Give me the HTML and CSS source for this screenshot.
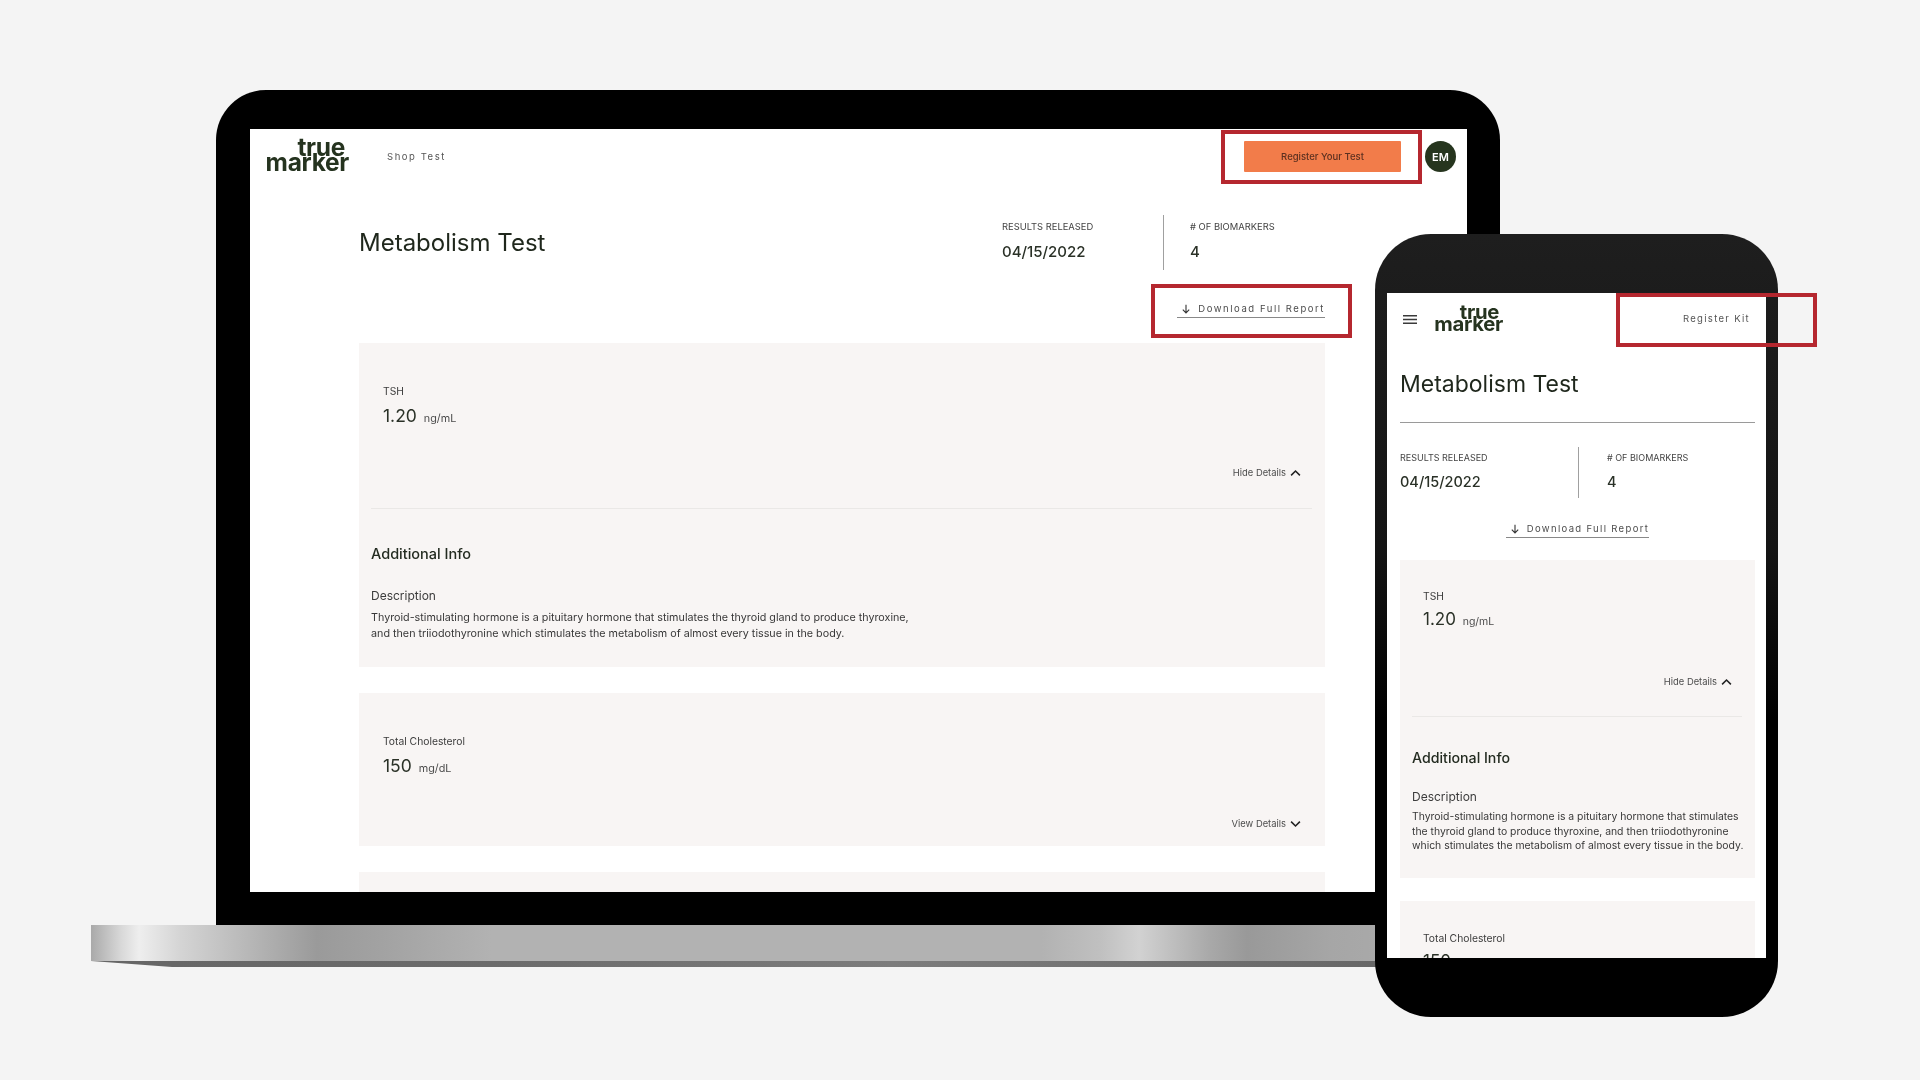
FILE: index.html
```html
<!DOCTYPE html>
<html lang="en">
<head>
<meta charset="utf-8">
<title>Metabolism Test</title>
<link rel="stylesheet" href="styles.css">
</head>
<body>
<div class="stage">
  <div class="base"><div class="base-top"></div><div class="base-lip"></div></div>

  <div class="laptop">
    <div class="screen">
      <header class="bar">
        <div class="logo"><span>true</span><span>marker</span></div>
        <a class="nav">Shop Test</a>
        <div class="bar-right">
          <a class="cta">Register Your Test</a>
          <div class="avatar">EM</div>
        </div>
      </header>
      <main class="main">
        <div class="head">
          <h1 class="title">Metabolism Test</h1>
          <div class="stats">
            <div class="stat stat-a"><div class="stat-label">RESULTS RELEASED</div><div class="stat-value">04/15/2022</div></div>
            <div class="stat stat-b"><div class="stat-label"># OF BIOMARKERS</div><div class="stat-value">4</div></div>
          </div>
        </div>
        <div class="dl-row">
          <a class="dl"><svg class="dl-icon" viewBox="0 0 10 10"><path d="M5 .8V8.8M1.8 5.7 5 8.9 8.2 5.7"/></svg>Download Full Report</a>
        </div>
        <section class="card card-open">
          <div class="metric">
            <div class="metric-label">TSH</div>
            <div class="metric-value">1.20 <span class="unit">ng/mL</span></div>
          </div>
          <div class="toggle">Hide Details<svg class="chev" viewBox="0 0 12 8"><path d="M1.2 6.6 6 1.8l4.800 4.800"/></svg></div>
          <hr class="sep">
          <h2 class="info-title">Additional Info</h2>
          <h3 class="info-sub">Description</h3>
          <p class="info-body">Thyroid-stimulating hormone is a pituitary hormone that stimulates the thyroid gland to produce thyroxine, and then triiodothyronine which stimulates the metabolism of almost every tissue in the body.</p>
        </section>
        <section class="card card-closed">
          <div class="metric">
            <div class="metric-label">Total Cholesterol</div>
            <div class="metric-value">150 <span class="unit">mg/dL</span></div>
          </div>
          <div class="toggle">View Details<svg class="chev" viewBox="0 0 12 8"><path d="M1.2 1.400 6 6.200l4.800-4.800"/></svg></div>
        </section>
        <section class="card card-stub"></section>
      </main>
    </div>
  </div>

  <div class="phone">
    <div class="screen">
      <header class="bar">
        <svg class="burger" viewBox="0 0 14 9"><path d="M0 .75H14M0 4.500H14M0 8.250H14"/></svg>
        <div class="logo"><span>true</span><span>marker</span></div>
        <a class="nav nav-end">Register Kit</a>
      </header>
      <main class="main">
        <h1 class="title">Metabolism Test</h1>
        <hr class="rule">
        <div class="stats">
          <div class="stat stat-a"><div class="stat-label">RESULTS RELEASED</div><div class="stat-value">04/15/2022</div></div>
          <div class="stat stat-b"><div class="stat-label"># OF BIOMARKERS</div><div class="stat-value">4</div></div>
        </div>
        <div class="dl-row">
          <a class="dl"><svg class="dl-icon" viewBox="0 0 10 10"><path d="M5 .8V8.8M1.8 5.7 5 8.9 8.2 5.700"/></svg>Download Full Report</a>
        </div>
        <section class="card card-open">
          <div class="metric">
            <div class="metric-label">TSH</div>
            <div class="metric-value">1.20 <span class="unit">ng/mL</span></div>
          </div>
          <div class="toggle">Hide Details<svg class="chev" viewBox="0 0 12 8"><path d="M1.2 6.6 6 1.8l4.800 4.800"/></svg></div>
          <hr class="sep">
          <h2 class="info-title">Additional Info</h2>
          <h3 class="info-sub">Description</h3>
          <p class="info-body">Thyroid-stimulating hormone is a pituitary hormone that stimulates the thyroid gland to produce thyroxine, and then triiodothyronine which stimulates the metabolism of almost every tissue in the body.</p>
        </section>
        <section class="card card-closed">
          <div class="metric">
            <div class="metric-label">Total Cholesterol</div>
            <div class="metric-value">150 <span class="unit">mg/dL</span></div>
          </div>
        </section>
      </main>
    </div>
  </div>

  <div class="mark mark-cta"></div>
  <div class="mark mark-dl"></div>
  <div class="mark mark-kit"></div>
</div>
</body>
</html>
```
FILE: styles.css
```css
* { box-sizing: border-box; }
html, body { margin: 0; padding: 0; }
body { background: #f4f4f4; font-family: Inter, "Liberation Sans", sans-serif; color: #232b20; }
a { display: block; }
h1, h2, h3, p { margin: 0; font-weight: 400; }
hr { border: 0; margin: 0; }

.stage { position: relative; width: 1920px; height: 1080px; overflow: hidden; }

/* laptop base */
.base { position: absolute; left: 91px; top: 925px; width: 1310px; display: flex; flex-direction: column; }
.base-top {
  height: 36px;
  background: linear-gradient(90deg, #a9a9a9 0, #d8d8d8 30px, #eeeeee 48px, #d4d4d4 90px, #9a9a9a 226px, #a2a2a2 290px, #b2b2b2 400px, #b2b2b2 950px, #c0c0c0 1010px, #d2d2d2 1048px, #a8a8a8 1120px, #999 1156px, #a6a6a6 1240px, #aaa 1310px);
}
.base-lip {
  height: 6px;
  background: linear-gradient(90deg, #666 0, #6b6b6b 400px, #7c7c7c 800px, #666 1310px);
  clip-path: polygon(0 0, 100% 0, 100% 100%, 81px 100%);
}

/* device frames */
.laptop {
  position: absolute; left: 216px; top: 90px; width: 1284px; height: 835px;
  padding: 39px 33px 33px 34px;
  background: #000;
  border-radius: 50px 50px 0 0 / 50px 50px 0 0;
}
.phone {
  position: absolute; left: 1375px; top: 234px; width: 403px; height: 783px;
  padding: 59px 12px;
  background: linear-gradient(180deg, #1e1e1e 0, #141414 40%, #000 62%);
  border-radius: 56px;
}
.screen { width: 100%; height: 100%; background: #fff; overflow: hidden; filter: blur(.35px); }

/* shared header */
.bar { display: flex; align-items: center; }
.laptop .bar { height: 55px; padding: 0 11px 0 14px; }
.phone .bar { height: 52px; padding: 0 16px; }

.logo { display: flex; flex-direction: column; align-items: flex-end; font-weight: 700; color: #25331f; letter-spacing: -.3px; }
.logo span:first-child { margin-right: 4px; }
.laptop .logo { width: 85px; margin-top: -3px; font-size: 24.500px; line-height: 15.500px; }
.phone .logo { width: 70px; margin-left: 16px; margin-top: -2px; font-size: 20.300px; line-height: 12px; }
.phone .logo span:first-child { margin-right: 4px; }

.nav { font-size: 9.500px; letter-spacing: 1.550px; color: #555; white-space: nowrap; }
.laptop .nav { margin-left: 38px; }
.nav-end { margin-left: auto; letter-spacing: 1.300px; margin-top: -1px; }

.burger { width: 14px; height: 9px; fill: none; stroke: #3a3a3a; stroke-width: 1.500; }

.bar-right { margin-left: auto; display: flex; align-items: center; gap: 24px; }
.cta {
  width: 157px; height: 31px; background: #f27c4a; border-radius: 1px;
  display: flex; align-items: center; justify-content: center;
  font-size: 9.500px; font-weight: 500; color: #5c3020;
}
.avatar {
  width: 31px; height: 31px; border-radius: 50%; background: #26351e; color: #fff;
  display: flex; align-items: center; justify-content: center;
  font-size: 11px; font-weight: 600;
}

/* content */
.laptop .main { padding: 0 142px 0 109px; }
.phone .main { padding: 0 11px 0 13px; }

.head { display: flex; justify-content: space-between; align-items: center; margin-top: 31px; height: 55px; }
.title { font-size: 24px; line-height: 30px; color: #1f271c; white-space: nowrap; }
.phone .title { font-size: 23px; margin-top: 24px; }
.rule { height: 1px; background: #9a9a9a; margin-top: 23px; }

.stats { display: flex; }
.laptop .stats { height: 55px; }
.phone .stats { height: 51px; margin-top: 24px; }
.stat { display: flex; flex-direction: column; }
.laptop .stat-a { width: 161px; }
.laptop .stat-b { width: 162px; padding-left: 26px; }
.phone .stat-a { width: 178px; }
.phone .stat-b { width: 177px; padding-left: 28px; }
.stat-b { border-left: 1px solid #a0a0a0; }
.stat-label { font-size: 9.400px; line-height: 12px; color: #444; white-space: nowrap; margin-top: 6px; }
.phone .stat-label { font-size: 9px; margin-top: 5px; }
.stat-value { font-size: 15px; font-weight: 500; line-height: 20px; color: #2a3127; margin-top: 9px; }
.phone .stat-value { font-size: 14.500px; margin-top: 8px; }

.dl-row { display: flex; }
.laptop .dl-row { justify-content: flex-end; margin-top: 30px; }
.phone .dl-row { justify-content: center; margin-top: 22px; }
.dl {
  display: flex; align-items: center; height: 18px;
  font-size: 9.500px; letter-spacing: 1.550px; color: #4c4c4c; white-space: nowrap;
  border-bottom: 1.500px solid #888; padding: 0 0 0 4px;
}
.phone .dl { letter-spacing: 1.330px; }
.dl-icon { width: 10px; height: 10px; margin-right: 7px; fill: none; stroke: #333; stroke-width: 1.100; }

.card { background: #f8f5f4; padding: 0 13px 0 12px; }
.laptop .card-open { margin-top: 25px; height: 324px; }
.laptop .card-closed { margin-top: 26px; height: 153px; }
.laptop .card-stub { margin-top: 26px; height: 40px; }
.phone .card-open { margin-top: 22px; height: 318px; }
.phone .card-closed { margin-top: 23px; height: 80px; }

.metric { padding-left: 12px; }
.laptop .metric { padding-top: 41px; }
.phone .metric { padding-top: 29px; padding-left: 11px; }
.phone .card-closed .metric { padding-top: 30px; }
.metric-label { font-size: 10.300px; line-height: 14px; color: #3c3c3c; white-space: nowrap; }
.metric-value { font-size: 17.500px; line-height: 24px; margin-top: 6px; color: #2a3127; white-space: nowrap; }
.phone .metric-value { font-size: 17px; margin-top: 4px; }
.unit { font-size: 10.800px; color: #4c4c4c; margin-left: 2px; }
.phone .unit { font-size: 10.500px; }

.toggle { display: flex; align-items: center; justify-content: flex-end; font-size: 9.400px; line-height: 14px; color: #4c4c4c; padding-right: 11px; }
.laptop .card-open .toggle { margin-top: 35px; }
.laptop .card-closed .toggle { margin-top: 36px; }
.phone .toggle { margin-top: 41px; padding-right: 10px; }
.chev { width: 11px; height: 8px; margin-left: 4px; fill: none; stroke: #222; stroke-width: 1.700; }

.sep { height: 1px; background: #eae8e6; }
.laptop .sep { margin-top: 28px; }
.phone .sep { margin-top: 27px; }

.info-title { font-size: 14.500px; font-weight: 500; line-height: 20px; color: #232b20; }
.laptop .info-title { margin-top: 35px; }
.phone .info-title { font-size: 14.200px; margin-top: 31px; }
.info-sub { font-size: 12px; line-height: 18px; color: #3c3c3c; }
.laptop .info-sub { margin-top: 23px; }
.phone .info-sub { margin-top: 20px; }
.info-body { color: #383838; }
.laptop .info-body { font-size: 10.750px; line-height: 15.500px; margin-top: 5px; max-width: 552px; }
.phone .info-body { font-size: 10.400px; line-height: 14.700px; margin-top: 4px; margin-right: -4px; }

/* red annotations */
.mark { position: absolute; width: 201px; height: 54px; border: 4px solid #b5272f; }
.mark-cta { left: 1221px; top: 130px; }
.mark-dl { left: 1151px; top: 284px; }
.mark-kit { left: 1616px; top: 293px; }
```
